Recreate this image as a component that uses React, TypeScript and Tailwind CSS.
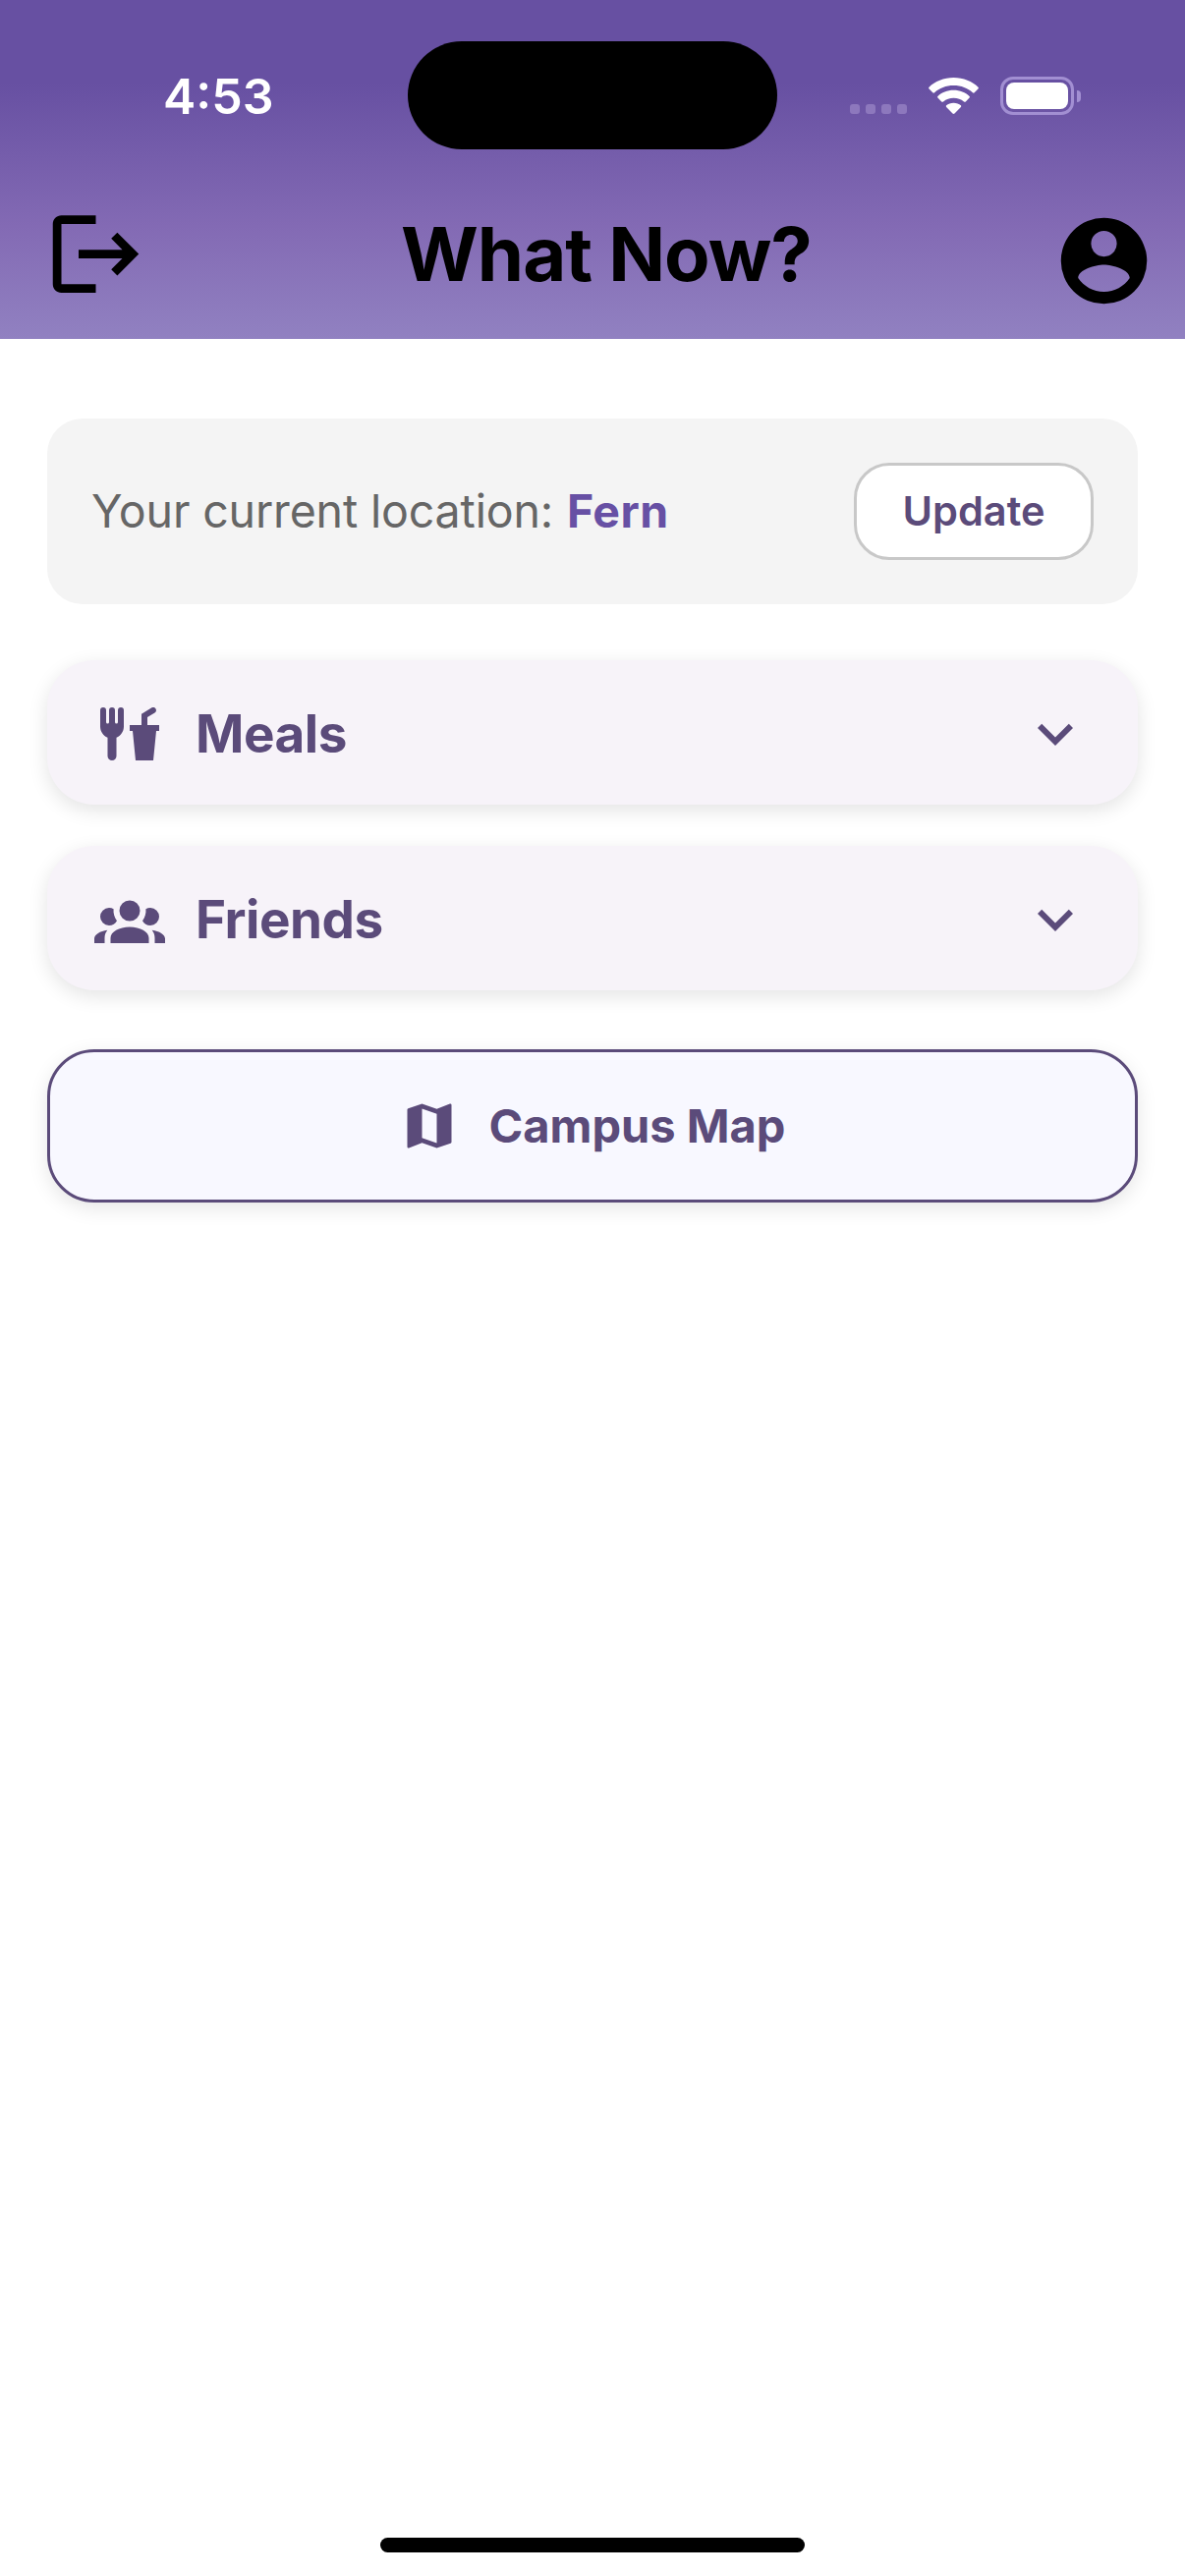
import type { ReactNode } from "react";

function Icon({ d, className }: { d: string; className: string }) {
  return (
    <svg viewBox="0 0 24 24" fill="currentColor" className={className} aria-hidden="true">
      <path d={d} />
    </svg>
  );
}

const LOGOUT =
  "M17 7L15.59 8.41L18.17 11H8V13H18.17L15.59 15.58L17 17L22 12M4 5H12V3H4C2.9 3 2 3.9 2 5V19C2 20.1 2.9 21 4 21H12V19H4V5Z";
const ACCOUNT =
  "M12,19.2C9.5,19.2 7.29,17.92 6,16C6.03,14 10,12.9 12,12.9C14,12.9 17.97,14 18,16C16.71,17.92 14.5,19.2 12,19.2M12,5A3,3 0 0,1 15,8A3,3 0 0,1 12,11A3,3 0 0,1 9,8A3,3 0 0,1 12,5M12,2A10,10 0 0,0 2,12A10,10 0 0,0 12,22A10,10 0 0,0 22,12C22,6.47 17.5,2 12,2Z";
const FOOD =
  "M3,3A1,1 0 0,0 2,4V8L2,9.5C2,11.19 3.03,12.63 4.5,13.22V19.5A1.5,1.5 0 0,0 6,21A1.5,1.5 0 0,0 7.5,19.5V13.22C8.97,12.63 10,11.19 10,9.5V8L10,4A1,1 0 0,0 9,3A1,1 0 0,0 8,4V8A0.5,0.5 0 0,1 7.5,8.5A0.5,0.5 0 0,1 7,8V4A1,1 0 0,0 6,3A1,1 0 0,0 5,4V8A0.5,0.5 0 0,1 4.5,8.5A0.5,0.5 0 0,1 4,8V4A1,1 0 0,0 3,3M19.88,3C19.75,3 19.62,3.03 19.5,3.09L16,5.25V9H12V11H13L14,21H20L21,11H22V9H18V6.34L20.5,4.84C20.97,4.56 21.13,3.94 20.84,3.47C20.66,3.16 20.27,3 19.88,3Z";
const GROUP =
  "M12,5.5A3.5,3.5 0 0,1 15.5,9A3.5,3.5 0 0,1 12,12.5A3.5,3.5 0 0,1 8.5,9A3.5,3.5 0 0,1 12,5.5M5,8C5.56,8 6.08,8.15 6.53,8.42C6.38,9.85 6.8,11.27 7.66,12.38C7.16,13.34 6.16,14 5,14A3,3 0 0,1 2,11A3,3 0 0,1 5,8M19,8A3,3 0 0,1 22,11A3,3 0 0,1 19,14C17.84,14 16.84,13.34 16.34,12.38C17.2,11.27 17.62,9.85 17.47,8.42C17.92,8.15 18.44,8 19,8M5.5,18.25C5.5,16.18 8.41,14.5 12,14.5C15.59,14.5 18.5,16.18 18.5,18.25V20H5.5V18.25M0,20V18.5C0,17.11 1.89,15.94 4.45,15.6C3.86,16.28 3.5,17.22 3.5,18.25V20H0M24,20H20.5V18.25C20.5,17.22 20.14,16.28 19.55,15.6C22.11,15.94 24,17.11 24,18.5V20Z";
const CHEVRON = "M7.41,8.58L12,13.17L16.59,8.58L18,10L12,16L6,10L7.41,8.58Z";
const MAP =
  "M20.5 3l-.16.03L15 5.1 9 3 3.36 4.9c-.21.07-.36.25-.36.48V20.5c0 .28.22.5.5.5l.16-.03L9 18.9l6 2.1 5.64-1.9c.21-.07.36-.25.36-.48V3.5c0-.28-.22-.5-.5-.5zM15 19l-6-2.11V5l6 2.11V19z";

function StatusBar() {
  return (
    <div className="relative flex h-[195px] items-center justify-between pl-[166px] pr-[106px] text-white">
      <span className="text-[50px] leading-none font-semibold">4:53</span>
      <div className="absolute top-[42px] left-[415px] h-[110px] w-[376px] rounded-full bg-black" />
      <div className="flex items-center">
        <div className="mt-[27px] flex gap-1.5">
          {[0, 1, 2, 3].map((i) => (
            <span key={i} className="size-2.5 rounded-[3px] bg-[#8d78bd]" />
          ))}
        </div>
        <svg viewBox="0 0 51 38" className="ml-[22px] h-[38px] w-[51px]" fill="currentColor" aria-hidden="true">
          <path d="M25.5 0C35.5 0 44.5 3.8 50.5 9.7Q51.3 10.6 50.4 11.5L46.7 15.3Q45.8 16 44.9 15.2C40 10.7 33.2 8 25.5 8S11 10.7 6.1 15.2Q5.2 16 4.3 15.3L.6 11.5Q-.3 10.6 .5 9.7C6.5 3.8 15.5 0 25.5 0Z" />
          <path d="M25.5 12.8C32 12.8 37.5 15.2 41.6 18.9Q42.4 19.8 41.6 20.6L37.8 24.4Q36.9 25.1 36 24.4C33 22 29.5 20.7 25.5 20.7S18 22 15 24.4Q14.1 25.1 13.2 24.4L9.4 20.6Q8.6 19.8 9.4 18.9C13.5 15.2 19 12.8 25.5 12.8Z" />
          <path d="M25.5 25.7C28.5 25.7 31 26.7 32.9 28.3Q33.7 29.1 32.9 29.9L26.5 36.6Q25.5 37.5 24.5 36.6L18.1 29.9Q17.3 29.1 18.1 28.3C20 26.7 22.5 25.7 25.5 25.7Z" />
        </svg>
        <div className="ml-[22px] flex h-[39px] w-[75px] rounded-[13px] border-[3px] border-[#a28fd2] p-[3px]">
          <div className="flex-1 rounded-[8px] bg-white" />
        </div>
        <div className="ml-[3px] h-3 w-1 rounded-r-full bg-[#a28fd2]" />
      </div>
    </div>
  );
}

function Accordion({ icon, children }: { icon: string; children: ReactNode }) {
  return (
    <button className="flex h-[147px] w-full items-center rounded-[48px] bg-[#f7f3f9] px-12 pt-[3px] text-[#5b4b7a] shadow-[0_6px_20px_rgba(0,0,0,0.11)]">
      <Icon d={icon} className="size-[72px]" />
      <span className="ml-[31px] text-[53px] leading-none font-bold tracking-[-0.009em]">{children}</span>
      <Icon d={CHEVRON} className="ml-auto size-[72px]" />
    </button>
  );
}

export default function App() {
  return (
    <div className="flex h-[2622px] w-[1206px] flex-col bg-white font-['Inter',sans-serif]">
      <header className="h-[345px] bg-[linear-gradient(180deg,#6750a2_0px,#6750a2_85px,#836ab4_230px,#9181c1_345px)]">
        <StatusBar />
        <div className="flex items-start pt-[11px] pr-[30px] pl-[45px]">
          <Icon d={LOGOUT} className="size-[105px]" />
          <h1 className="ml-[258px] pt-[14px] text-[76px] leading-none font-bold tracking-[-0.013em]">What Now?</h1>
          <Icon d={ACCOUNT} className="mt-[7px] ml-auto size-[105px]" />
        </div>
      </header>
      <main className="flex flex-1 flex-col px-12 pt-[81px]">
        <section className="flex h-[189px] items-center justify-between rounded-[36px] bg-[#f4f4f4] px-[45px]">
          <p className="text-[46.5px] leading-none tracking-[-0.15px] text-[#666666]">
            Your current location:{" "}
            <strong className="ml-px font-bold tracking-[0.4px] text-[#6750a4]">Fern</strong>
          </p>
          <button className="flex h-[99px] w-[244px] items-center justify-center rounded-[36px] border-[3px] border-[#c8c8c8] bg-white text-[41.5px] leading-none font-semibold text-[#5b4b7a]">
            Update
          </button>
        </section>
        <div className="mt-[57px] flex flex-col gap-[42px]">
          <Accordion icon={FOOD}>Meals</Accordion>
          <Accordion icon={GROUP}>Friends</Accordion>
        </div>
        <button className="mt-[60px] flex h-[156px] items-center justify-center gap-[31px] rounded-[48px] border-[3px] border-[#5b4b7a] bg-[#f8f8ff] text-[#5b4b7a] shadow-[0_6px_20px_rgba(0,0,0,0.1)]">
          <Icon d={MAP} className="size-[60px]" />
          <span className="pb-px text-[47px] leading-none font-bold">Campus Map</span>
        </button>
      </main>
      <div className="mx-auto mb-6 h-[15px] w-[432px] rounded-full bg-black" />
    </div>
  );
}
